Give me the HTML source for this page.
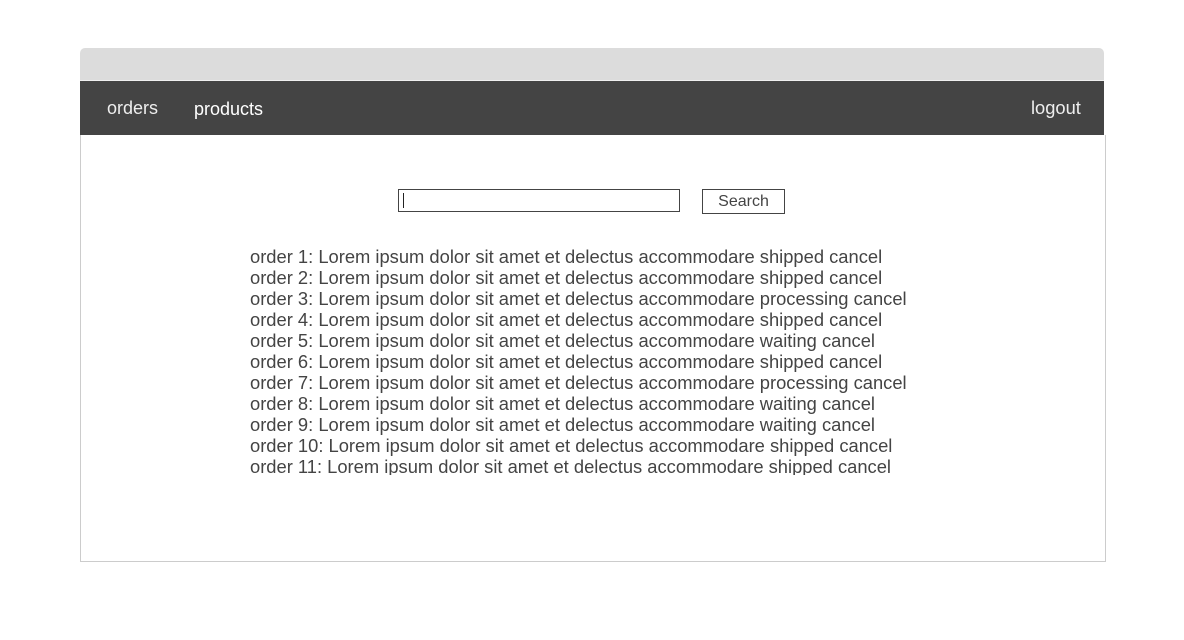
<!DOCTYPE html>
<html><head><meta charset="utf-8"><style>
html,body{margin:0;padding:0;background:#fff;width:1184px;height:640px;overflow:hidden;font-family:"Liberation Sans",sans-serif}
.top{position:absolute;left:80px;top:48px;width:1024px;height:32px;background:#dcdcdc;border-radius:5px 5px 0 0}
.nav{position:absolute;left:80px;top:80px;width:1024px;height:55px;background:#444;border-top:1px solid #f0f0f0;box-sizing:border-box}
.nav span{position:absolute;top:17px;font-size:18px;color:#eee}
.body{position:absolute;left:80px;top:135px;width:1026px;height:427px;border:1px solid #ccc;border-top:none;box-sizing:border-box}
.inp{position:absolute;left:398px;top:189px;width:282px;height:23px;border:1px solid #444;box-sizing:border-box}
.inp i{position:absolute;left:4px;top:3px;width:1px;height:15px;background:#222}
.btn{position:absolute;left:702px;top:189px;width:83px;height:25px;border:1px solid #444;box-sizing:border-box;font-size:16px;color:#444;text-align:center;line-height:24px}
.list{position:absolute;left:250px;top:246px;height:229px;overflow:hidden;font-size:18.35px;line-height:21px;color:#444;white-space:nowrap}
</style></head><body>
<div class="top"></div>
<div class="nav"><span style="left:27px">orders</span><span style="left:114px;color:#fff;top:18px">products</span><span style="left:951px;font-size:18.3px;top:16px">logout</span></div>
<div class="body"></div>
<div class="inp"><i></i></div>
<div class="btn">Search</div>
<div class="list">
order 1: Lorem ipsum dolor sit amet et delectus accommodare shipped cancel<br>
order 2: Lorem ipsum dolor sit amet et delectus accommodare shipped cancel<br>
order 3: Lorem ipsum dolor sit amet et delectus accommodare processing cancel<br>
order 4: Lorem ipsum dolor sit amet et delectus accommodare shipped cancel<br>
order 5: Lorem ipsum dolor sit amet et delectus accommodare waiting cancel<br>
order 6: Lorem ipsum dolor sit amet et delectus accommodare shipped cancel<br>
order 7: Lorem ipsum dolor sit amet et delectus accommodare processing cancel<br>
order 8: Lorem ipsum dolor sit amet et delectus accommodare waiting cancel<br>
order 9: Lorem ipsum dolor sit amet et delectus accommodare waiting cancel<br>
order 10: Lorem ipsum dolor sit amet et delectus accommodare shipped cancel<br>
order 11: Lorem ipsum dolor sit amet et delectus accommodare shipped cancel<br>
order 12: Lorem ipsum dolor sit amet et delectus accommodare shipped cancel
</div>
</body></html>
